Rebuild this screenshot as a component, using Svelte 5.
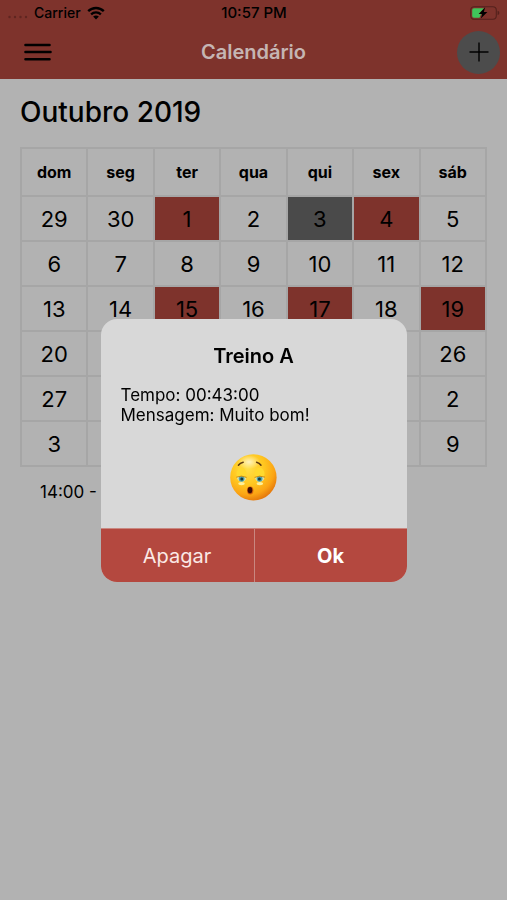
<script>
    const weekDays = ['dom', 'seg', 'ter', 'qua', 'qui', 'sex', 'sáb']

    const weeks = [
        [29, 30, 1, 2, 3, 4, 5],
        [6, 7, 8, 9, 10, 11, 12],
        [13, 14, 15, 16, 17, 18, 19],
        [20, 21, 22, 23, 24, 25, 26],
        [27, 28, 29, 30, 31, 1, 2],
        [3, 4, 5, 6, 7, 8, 9]
    ]

    // keys are "week-day" positions in the grid
    const marks = {
        '0-2': 'trained',
        '0-4': 'today',
        '0-5': 'trained',
        '2-2': 'trained',
        '2-4': 'trained',
        '2-6': 'trained'
    }

    let isOpen = $state(true)

    const closeAlert = () => isOpen = false
</script>


<div class="screen">
    <header>
        <div class="statusbar">
            <div class="carrier">
                <svg class="signal" width="20" height="4" viewBox="0 0 20 4" aria-hidden="true">
                    <circle cx="1.5" cy="2" r="1.2"/>
                    <circle cx="7" cy="2" r="1.2"/>
                    <circle cx="12.5" cy="2" r="1.2"/>
                    <circle cx="18" cy="2" r="1.2"/>
                </svg>
                <span>Carrier</span>
                <svg width="18" height="14" viewBox="0 0 18 14" aria-hidden="true">
                    <path d="M1.2 5.2 C5.6 0.9 12.4 0.9 16.8 5.2" fill="none" stroke="#000" stroke-width="2.4"/>
                    <path d="M4.1 8.3 C6.9 5.7 11.1 5.7 13.9 8.3" fill="none" stroke="#000" stroke-width="2.3"/>
                    <path d="M6.1 10.6 Q9 8.2 11.9 10.6 L9 13.6 Z" fill="#000"/>
                </svg>
            </div>
            <span class="time">10:57 PM</span>
            <div class="battery">
                <svg width="30" height="14" viewBox="0 0 30 14" aria-hidden="true">
                    <rect x="0.7" y="0.7" width="25.6" height="12.6" rx="3.5" fill="none" stroke="#54211c" stroke-width="1.1"/>
                    <path d="M27.6 4.8 Q29.4 5.4 29.4 7 Q29.4 8.6 27.6 9.2 Z" fill="#54211c"/>
                    <path d="M4 2.2 H14 L8.5 8 H11 L9.5 11.8 H4 Q2.2 11.8 2.2 10 V4 Q2.2 2.2 4 2.2 Z" fill="#3fc45a"/>
                    <path d="M15.2 1.2 L8.8 7.9 H12.2 L10.8 12.6 L17.4 5.9 H13.8 Z" fill="#000"/>
                </svg>
            </div>
        </div>
        <div class="navbar">
            <button class="menu" aria-label="Menu">
                <svg width="28" height="20" viewBox="0 0 28 20" aria-hidden="true">
                    <path d="M1.5 3 H25.5 M1.5 10 H26.5 M1.5 17.2 H25.5" stroke="#000" stroke-width="2.6" stroke-linecap="round"/>
                </svg>
            </button>
            <h1>Calendário</h1>
            <button class="add" aria-label="Adicionar">
                <svg width="20" height="20" viewBox="0 0 20 20" aria-hidden="true">
                    <path d="M10 0.5 V19.5 M0.5 10 H19.5" stroke="#000" stroke-width="1.4"/>
                </svg>
            </button>
        </div>
    </header>

    <main>
        <h2>Outubro 2019</h2>
        <table>
            <thead>
                <tr>
                    {#each weekDays as day}
                        <th scope="col">{day}</th>
                    {/each}
                </tr>
            </thead>
            <tbody>
                {#each weeks as week, w}
                    <tr>
                        {#each week as day, d}
                            <td class={marks[`${w}-${d}`]}>{day}</td>
                        {/each}
                    </tr>
                {/each}
            </tbody>
        </table>
        <p class="entry">14:00 -</p>
    </main>
</div>

{#if isOpen}
    <div class="backdrop">
        <div class="alert" role="alertdialog" aria-labelledby="alert-title" aria-describedby="alert-message">
            <div class="content">
                <h3 id="alert-title">Treino A</h3>
                <p id="alert-message">Tempo: 00:43:00<br>Mensagem: Muito bom!</p>
                <svg class="face" width="48" height="48" viewBox="0 0 48 48" aria-hidden="true">
                    <defs>
                        <radialGradient id="skin" cx="0.38" cy="0.3" r="0.72">
                            <stop offset="0" stop-color="#ffe04a"/>
                            <stop offset="0.5" stop-color="#ffc61f"/>
                            <stop offset="0.8" stop-color="#fba414"/>
                            <stop offset="1" stop-color="#e5790c"/>
                        </radialGradient>
                        <radialGradient id="shine">
                            <stop offset="0" stop-color="#fff3bd"/>
                            <stop offset="1" stop-color="#fff3bd" stop-opacity="0"/>
                        </radialGradient>
                    </defs>
                    <circle cx="23.4" cy="23.4" r="23.2" fill="url(#skin)"/>
                    <ellipse cx="19" cy="8" rx="11" ry="7" fill="url(#shine)"/>
                    <ellipse cx="11.5" cy="20" rx="5" ry="6.5" fill="#ffd92e"/>
                    <ellipse cx="29.5" cy="20" rx="5" ry="6.5" fill="#ffd92e"/>
                    <path d="M6.8 23 Q12 21.5 16.2 23.4 Q16 27.4 11.8 27.8 Q7.5 27.4 6.8 23 Z" fill="#dfe3b4"/>
                    <path d="M25 23.4 Q29.5 21.5 34.6 23 Q34 27.4 29.7 27.8 Q25.4 27.4 25 23.4 Z" fill="#dfe3b4"/>
                    <ellipse cx="11.5" cy="29.6" rx="3.2" ry="1.6" fill="#fff09a"/>
                    <ellipse cx="29.8" cy="29.6" rx="3.2" ry="1.6" fill="#fff09a"/>
                    <circle cx="11.6" cy="24.8" r="2.9" fill="#4ba3ad"/>
                    <circle cx="29.6" cy="24.8" r="2.9" fill="#4ba3ad"/>
                    <circle cx="11.8" cy="25" r="1.5" fill="#173a44"/>
                    <circle cx="29.4" cy="25" r="1.5" fill="#173a44"/>
                    <path d="M6.4 23.2 Q11.5 21 16.6 23.4" fill="none" stroke="#c68a12" stroke-width="1"/>
                    <path d="M24.6 23.4 Q29.5 21 35 23.2" fill="none" stroke="#c68a12" stroke-width="1"/>
                    <path d="M8.4 11.2 Q10 9 13.2 8.2" fill="none" stroke="#5d3a10" stroke-width="1.5" stroke-linecap="round"/>
                    <path d="M26.6 8.2 Q29.4 9 31 11.2" fill="none" stroke="#5d3a10" stroke-width="1.5" stroke-linecap="round"/>
                    <ellipse cx="20.2" cy="36.4" rx="3.2" ry="4" fill="#d5640c"/>
                    <ellipse cx="20" cy="36.2" rx="2.3" ry="3.1" fill="#3d0f08"/>
                </svg>
            </div>
            <div class="actions">
                <button onclick={closeAlert}>Apagar</button>
                <button class="ok" onclick={closeAlert}>Ok</button>
            </div>
        </div>
    </div>
{/if}


<style>
    :global(body) {
        margin: 0;
        background: #b2b2b2;
        color: #000;
        font-family: Inter, Roboto, sans-serif;
    }

    h1, h2, h3, p {
        margin: 0;
    }

    button {
        padding: 0;
        border: none;
        background: none;
        color: inherit;
        font-family: inherit;
        cursor: pointer;
    }

    svg {
        display: block;
    }

    header {
        background: #7e332c;
    }

    .statusbar, .navbar {
        display: grid;
        grid-template-columns: 1fr auto 1fr;
        align-items: center;
    }

    .statusbar {
        height: 25px;
        padding: 0 7px 0 8px;
        font-size: 14px;
        font-weight: 500;
    }

    .time {
        font-size: 15px;
    }

    .carrier {
        display: flex;
        align-items: center;
        gap: 6px;
    }

    .signal {
        align-self: flex-end;
        margin-bottom: 2px;
        fill: #5f2520;
    }

    .battery {
        justify-self: end;
    }

    .navbar {
        height: 54px;
        padding: 0 7px;
    }

    .menu {
        justify-self: start;
        padding-left: 17px;
    }

    h1 {
        color: #c5b5b3;
        font-size: 20px;
        font-weight: 600;
    }

    .add {
        display: flex;
        justify-content: center;
        align-items: center;
        justify-self: end;
        width: 43px;
        height: 43px;
        border-radius: 50%;
        background: #4c4c4c;
    }

    main {
        padding: 17px 20px;
    }

    h2 {
        margin-bottom: 18px;
        font-size: 28px;
        font-weight: 500;
        line-height: 33px;
    }

    table {
        width: 100%;
        border-collapse: collapse;
        table-layout: fixed;
    }

    th, td {
        padding: 0;
        border: 2px solid #a6a6a6;
        text-align: center;
    }

    th {
        height: 46px;
        font-size: 16px;
        font-weight: 700;
    }

    td {
        height: 43px;
        font-size: 22px;
    }

    .trained {
        background: #7e332c;
    }

    .today {
        background: #4a4a4a;
    }

    .entry {
        margin: 15px 20px;
        font-size: 17px;
        line-height: 20px;
    }

    .backdrop {
        position: fixed;
        inset: 0;
        display: flex;
        justify-content: center;
        align-items: center;
    }

    .alert {
        width: 306px;
        overflow: hidden;
        border-radius: 16px;
        background: #d8d8d8;
    }

    .content {
        padding: 24px 20px 26px;
    }

    h3 {
        margin-bottom: 16px;
        font-size: 20px;
        font-weight: 600;
        line-height: 26px;
        text-align: center;
    }

    #alert-message {
        font-size: 17px;
        line-height: 20px;
    }

    .face {
        margin: 29px auto 0;
    }

    .actions {
        display: grid;
        grid-template-columns: 1fr 1fr;
        border-top: 1px solid #c98780;
    }

    .actions button {
        height: 53px;
        padding-top: 2px;
        background: #b4483f;
        color: #fbe9e6;
        font-size: 20px;
    }

    .actions .ok {
        border-left: 1px solid #c98780;
        color: #fff;
        font-weight: 700;
    }
</style>
